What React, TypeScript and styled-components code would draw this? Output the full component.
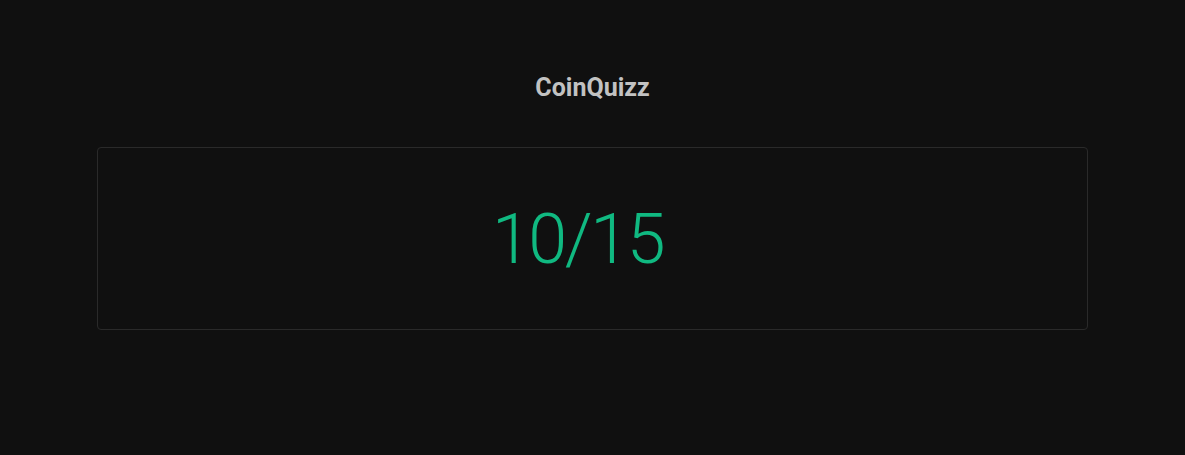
import React from 'react'
import styled, { createGlobalStyle } from 'styled-components'

const GlobalStyle = createGlobalStyle`
  html, body {
    margin: 0;
    padding: 0;
    background: #101010;
    font-family: Roboto, "Liberation Sans", sans-serif;
  }
`

const Page = styled.div`
  min-height: 455px;
  display: flex;
  flex-direction: column;
  align-items: center;
  padding: 0 97px;
  box-sizing: border-box;
`

const Title = styled.h1`
  margin: 73px 0 0;
  font-size: 25px;
  line-height: 29px;
  font-weight: 700;
  color: #c2c2c2;
`

const ScoreCard = styled.div`
  margin-top: 45px;
  width: 100%;
  height: 183px;
  box-sizing: border-box;
  border: 1px solid #2a2a2a;
  border-radius: 4px;
  display: flex;
  align-items: center;
  justify-content: center;
  padding-right: 30px;
`

const Score = styled.span<{ $passed: boolean }>`
  font-size: 70px;
  font-weight: 300;
  line-height: 1;
  letter-spacing: -2.4px;
  color: ${(p) => (p.$passed ? '#10b981' : '#ef4444')};
`

const App: React.FC = () => {
  const correct = 10
  const total = 15
  return (
    <>
      <GlobalStyle />
      <Page>
        <Title>CoinQuizz</Title>
        <ScoreCard>
          <Score $passed={correct / total >= 0.5}>{correct}/{total}</Score>
        </ScoreCard>
      </Page>
    </>
  )
}

export default App
